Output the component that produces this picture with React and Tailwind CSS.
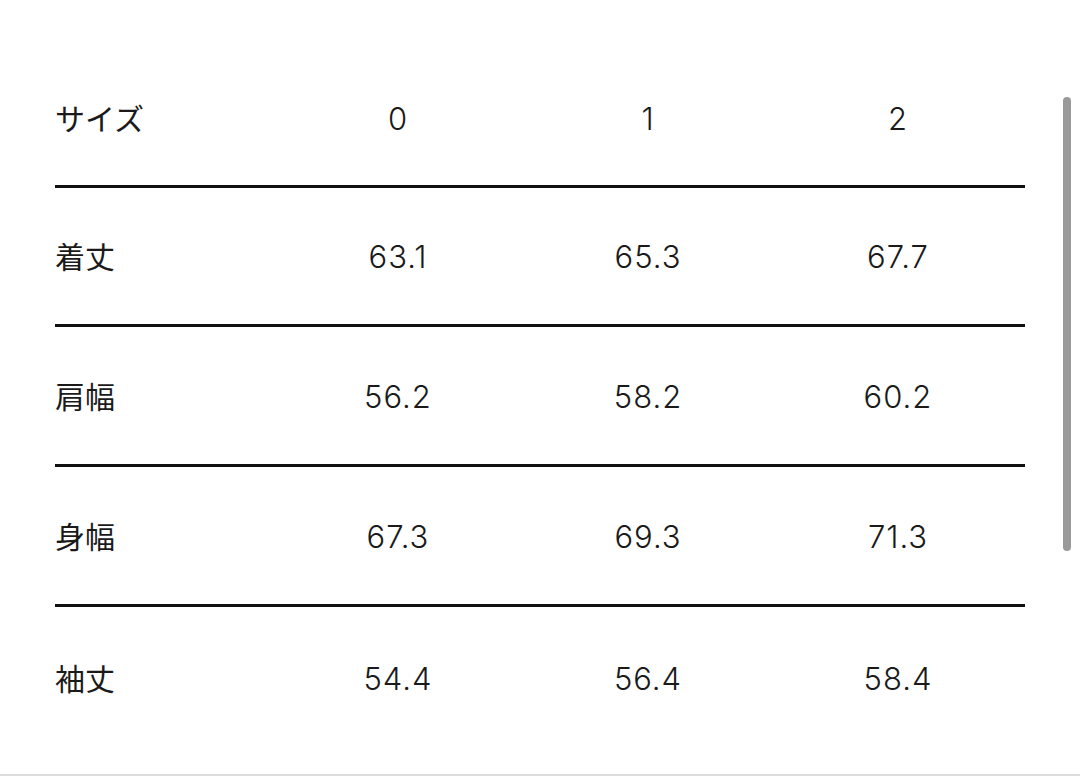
const HEAD = ['サイズ', '0', '1', '2'];

const ROWS = [
  ['着丈', '63.1', '65.3', '67.7'],
  ['肩幅', '56.2', '58.2', '60.2'],
  ['身幅', '67.3', '69.3', '71.3'],
  ['袖丈', '54.4', '56.4', '58.4'],
];

const Row = ({ cells, last }) => (
  <div
    className={`grid grid-cols-[218px_250px_250px_250px] h-[140px] items-center ${
      last ? '' : 'border-b-[3px] border-[#111]'
    }`}
  >
    {cells.map((c, i) => (
      <div
        key={i}
        className={
          i === 0
            ? 'text-left text-[30px]'
            : 'text-center text-[31px] pt-[3px] font-[350] tracking-[1px] font-[Inter,sans-serif]'
        }
      >
        {c}
      </div>
    ))}
  </div>
);

export default function App() {
  return (
    <div
      className="relative h-[776px] w-[1080px] bg-white text-[#1a1a1a] border-b-2 border-[#dcdcdc] overflow-hidden"
      style={{ fontFamily: '"Noto Sans CJK JP", "Noto Sans", sans-serif' }}
    >
      <div className="ml-[55px] mt-[48px] w-[970px] leading-none">
        <div className="-mb-[1.5px]">
          <Row cells={HEAD} />
        </div>
        {ROWS.map((r, i) => (
          <Row key={r[0]} cells={r} last={i === ROWS.length - 1} />
        ))}
      </div>

      {/* overlay scrollbar */}
      <div className="absolute left-[1063px] top-[97px] h-[454px] w-[8px] rounded-full bg-[#9a9a9a]" />
    </div>
  );
}
